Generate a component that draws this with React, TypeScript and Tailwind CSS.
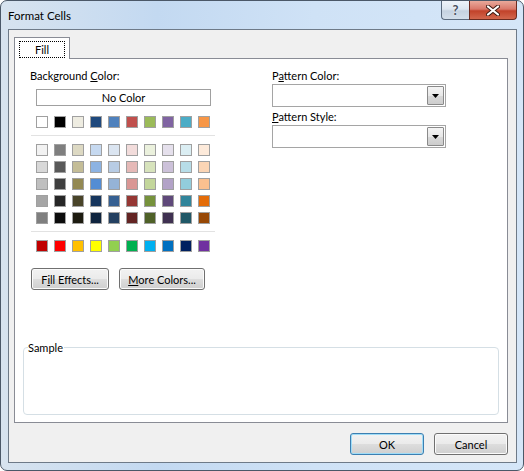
import type { ReactNode } from 'react';

const themeRow = [
  'bg-[#FFFFFF]', 'bg-[#000000]', 'bg-[#EEECE1]', 'bg-[#1F497D]', 'bg-[#4F81BD]',
  'bg-[#C0504D]', 'bg-[#9BBB59]', 'bg-[#8064A2]', 'bg-[#4BACC6]', 'bg-[#F79646]',
];

const tintRows = [
  ['bg-[#F2F2F2]', 'bg-[#7F7F7F]', 'bg-[#DDD9C3]', 'bg-[#C6D9F0]', 'bg-[#DBE5F1]', 'bg-[#F2DCDB]', 'bg-[#EBF1DD]', 'bg-[#E5E0EC]', 'bg-[#DBEEF3]', 'bg-[#FDEADA]'],
  ['bg-[#D8D8D8]', 'bg-[#595959]', 'bg-[#C4BD97]', 'bg-[#8DB3E2]', 'bg-[#B8CCE4]', 'bg-[#E5B9B7]', 'bg-[#D7E3BC]', 'bg-[#CCC1D9]', 'bg-[#B7DDE8]', 'bg-[#FBD5B5]'],
  ['bg-[#BFBFBF]', 'bg-[#3F3F3F]', 'bg-[#938953]', 'bg-[#548DD4]', 'bg-[#95B3D7]', 'bg-[#D99694]', 'bg-[#C3D69B]', 'bg-[#B2A2C7]', 'bg-[#92CDDC]', 'bg-[#FAC08F]'],
  ['bg-[#A5A5A5]', 'bg-[#262626]', 'bg-[#494429]', 'bg-[#17365D]', 'bg-[#366092]', 'bg-[#953734]', 'bg-[#76923C]', 'bg-[#5F497A]', 'bg-[#31859B]', 'bg-[#E36C09]'],
  ['bg-[#7F7F7F]', 'bg-[#0C0C0C]', 'bg-[#1D1B10]', 'bg-[#0F243E]', 'bg-[#244061]', 'bg-[#632423]', 'bg-[#4F6128]', 'bg-[#3F3151]', 'bg-[#205867]', 'bg-[#974806]'],
];

const standardRow = [
  'bg-[#C00000]', 'bg-[#FF0000]', 'bg-[#FFC000]', 'bg-[#FFFF00]', 'bg-[#92D050]',
  'bg-[#00B050]', 'bg-[#00B0F0]', 'bg-[#0070C0]', 'bg-[#002060]', 'bg-[#7030A0]',
];

function SwatchRow({ colors }: { colors: string[] }) {
  return (
    <div className="flex gap-[6px] ml-[6px]">
      {colors.map((c, i) => (
        <div key={i} className={`w-[12px] h-[12px] border border-[#a0a0a0] ${c}`} />
      ))}
    </div>
  );
}

function WinButton({ children, width, isDefault }: { children: ReactNode; width: string; isDefault?: boolean }) {
  return (
    <button
      className={`${width} h-[22px] rounded-[3px] border flex items-center justify-center text-black bg-[linear-gradient(#f2f2f2_0%,#ebebeb_48%,#dddddd_52%,#cfcfcf_100%)] ${
        isDefault
          ? 'border-[#3c7fb1] shadow-[inset_0_0_0_1px_#9fdcf7]'
          : 'border-[#707070] shadow-[inset_0_0_0_1px_#fbfbfb]'
      }`}
    >
      {children}
    </button>
  );
}

function Dropdown() {
  return (
    <div className="w-[174px] h-[23px] border border-[#a5a5a5] bg-white flex justify-end items-center pr-[1px]">
      <div className="w-[17px] h-[19px] border border-[#8a8a8a] rounded-[1px] bg-[linear-gradient(#f4f4f4_0%,#e8e8e8_50%,#d9d9d9_51%,#cdcdcd_100%)] flex items-center justify-center">
        <svg width="7" height="4" viewBox="0 0 7 4">
          <path d="M0 0h7L3.5 4z" fill="#000" />
        </svg>
      </div>
    </div>
  );
}

export default function App() {
  return (
    <div className="w-[524px] h-[471px] font-['Lato','Liberation_Sans',sans-serif] text-[11px] leading-[15px] text-black">
      <div className="w-full h-full flex flex-col rounded-[7px] border border-[#4b5868] bg-[linear-gradient(90deg,#d7e3ef_0%,#c3d9f1_30%,#cfe2f6_60%,#d5e6f8_100%)] overflow-hidden">
        {/* title bar */}
        <div className="h-[28px] flex items-start shrink-0">
          <div className="pl-[7px] pt-[7px] text-[11.5px] text-[#000]">Format Cells</div>
          <div className="ml-auto mr-[6px] flex">
            <div className="w-[28px] h-[19px] rounded-bl-[4px] border border-t-0 border-[#5a6a7d] border-r-0 bg-[linear-gradient(#eef3f9_0%,#dde6f0_45%,#c5d2e0_55%,#d3dfeb_100%)] flex items-center justify-center">
              <span className="text-[13px] font-bold text-[#4a5260] leading-none [text-shadow:0_0_2px_#fff]">?</span>
            </div>
            <div className="w-[48px] h-[19px] rounded-br-[4px] border border-t-0 border-[#6b2b20] bg-[linear-gradient(#e9a99b_0%,#d9786a_45%,#c2422a_55%,#d2674d_100%)] flex items-center justify-center">
              <svg width="14" height="11" viewBox="0 0 14 11">
                <path d="M2 1.5L12 9.5M12 1.5L2 9.5" stroke="#3d1a12" strokeWidth="4" strokeLinecap="round" />
                <path d="M2 1.5L12 9.5M12 1.5L2 9.5" stroke="#fff" strokeWidth="2.2" strokeLinecap="round" />
              </svg>
            </div>
          </div>
        </div>

        {/* client area */}
        <div className="flex-1 pl-[7px] pr-[6px] pb-[7px] flex">
          <div className="flex-1 border border-[#6e7a88] bg-[#f0f0f0] flex flex-col">
            {/* tab strip */}
            <div className="pl-[5px] pt-[7px] flex">
              <div className="w-[56px] h-[22px] bg-white border border-b-0 border-[#898c95] flex items-start justify-center pt-[3px] relative z-10 -mb-[1px]">
                <div className="w-[46px] h-[17px] border border-dotted border-black flex items-center justify-center">Fill</div>
              </div>
            </div>

            {/* tab panel */}
            <div className="ml-[5px] w-[494px] h-[365px] bg-white border border-[#898c95] flex flex-col">
              <div className="flex">
                {/* left column */}
                <div className="pl-[15px] pt-[9px] w-[257px] flex flex-col">
                  <div>
                    Background <u>C</u>olor:
                  </div>
                  <div className="mt-[6px] ml-[6px] w-[175px] h-[17px] border border-[#a0a0a0] flex items-center justify-center">
                    No Color
                  </div>
                  <div className="mt-[10px]">
                    <SwatchRow colors={themeRow} />
                  </div>
                  <div className="mt-[7px] ml-[1px] w-[184px] h-[1px] bg-[#e2e2e2]" />
                  <div className="mt-[8px] flex flex-col gap-[5px]">
                    {tintRows.map((row, i) => (
                      <SwatchRow key={i} colors={row} />
                    ))}
                  </div>
                  <div className="mt-[7px] ml-[1px] w-[184px] h-[1px] bg-[#e2e2e2]" />
                  <div className="mt-[8px]">
                    <SwatchRow colors={standardRow} />
                  </div>
                  <div className="mt-[16px] ml-[1px] flex gap-[10px]">
                    <WinButton width="w-[78px]">
                      F<u>i</u>ll Effects...
                    </WinButton>
                    <WinButton width="w-[86px]">
                      <u>M</u>ore Colors...
                    </WinButton>
                  </div>
                </div>

                {/* right column */}
                <div className="pt-[9px] flex flex-col">
                  <div>
                    P<u>a</u>ttern Color:
                  </div>
                  <div className="mt-[1px]">
                    <Dropdown />
                  </div>
                  <div className="mt-[2px]">
                    <u>P</u>attern Style:
                  </div>
                  <div className="mt-[1px]">
                    <Dropdown />
                  </div>
                </div>
              </div>

              {/* sample group */}
              <div className="mt-auto mb-[7px] ml-[8px] w-[476px] h-[68px] rounded-[4px] border border-[#d5dfe5] relative">
                <span className="absolute left-[4px] -top-[8px] bg-white pr-[1px] leading-[15px]">Sample</span>
              </div>
            </div>

            {/* dialog buttons */}
            <div className="mt-[10px] mr-[8px] flex justify-end gap-[10px]">
              <WinButton width="w-[74px]" isDefault>
                OK
              </WinButton>
              <WinButton width="w-[74px]">Cancel</WinButton>
            </div>
          </div>
        </div>
      </div>
    </div>
  );
}
